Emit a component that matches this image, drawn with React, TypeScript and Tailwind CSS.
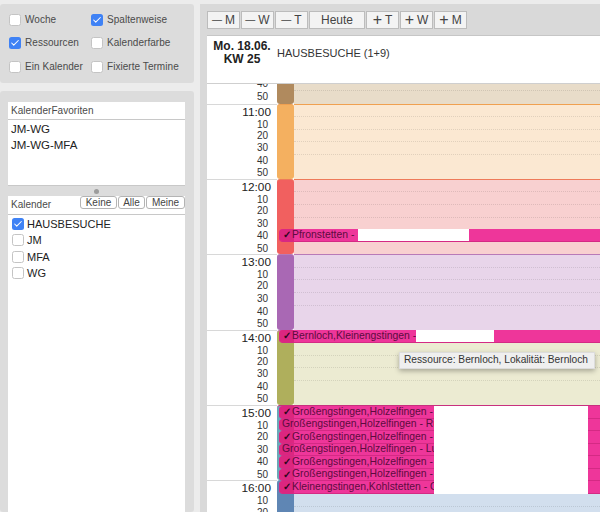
import { Check } from "lucide-react";

const hours = [
  { label: "11:00", strip: "bg-[#f4b060]", body: "bg-[#fbe8d2]", line: "border-[#f0a050]" },
  { label: "12:00", strip: "bg-[#f1605f]", body: "bg-[#f8d0d0]", line: "border-[#ee7a5a]" },
  { label: "13:00", strip: "bg-[#a968b4]", body: "bg-[#e8d5ea]", line: "border-[#b87ab8]" },
  { label: "14:00", strip: "bg-[#afaf5c]", body: "bg-[#ecebd2]", line: "border-[#c060a8]" },
  { label: "15:00", strip: "bg-[#6aa8b8]", body: "bg-[#d4e4e8]", line: "border-[#c8307e]" },
  { label: "16:00", strip: "bg-[#5f86b4]", body: "bg-[#d2dfee]", line: "border-[#6f92bb]" },
];

const nav = [
  { sign: "—", text: "M", w: "w-[33px]" },
  { sign: "—", text: "W", w: "w-[33px]" },
  { sign: "—", text: "T", w: "w-[33px]" },
  { sign: "", text: "Heute", w: "w-[56px]" },
  { sign: "+", text: "T", w: "w-[33px]" },
  { sign: "+", text: "W", w: "w-[33px]" },
  { sign: "+", text: "M", w: "w-[33px]" },
];

const stacked = [
  { text: "Großengstingen,Holzelfingen - ", done: true },
  { text: "Großengstingen,Holzelfingen - Ru", done: false },
  { text: "Großengstingen,Holzelfingen - ", done: true },
  { text: "Großengstingen,Holzelfingen - Lu", done: false },
  { text: "Großengstingen,Holzelfingen - ", done: true },
  { text: "Großengstingen,Holzelfingen - ", done: true },
  { text: "Kleinengstingen,Kohlstetten - O", done: true },
];

function Box({ checked }: { checked?: boolean }) {
  return (
    <span
      className={
        checked
          ? "flex h-3 w-3 shrink-0 items-center justify-center rounded-[2.5px] bg-[#3f82f5]"
          : "flex h-3 w-3 shrink-0 items-center justify-center rounded-[2.5px] border border-[#c4c4c4] bg-white"
      }
    >
      {checked && <Check size={10} strokeWidth={2.5} className="text-white" />}
    </span>
  );
}

function Option({ label, checked }: { label: string; checked?: boolean }) {
  return (
    <div className="flex items-center gap-[4px] text-[10px] tracking-[0.05px] text-[#4a4a4a]">
      <Box checked={checked} />
      <span>{label}</span>
    </div>
  );
}

function Event({ text, done, white }: { text: string; done?: boolean; white?: string }) {
  return (
    <div className="relative flex h-[12.57px] items-center overflow-hidden whitespace-nowrap rounded-l-[4px] border-b border-[#d42a84] bg-[#ee369a] text-[10.4px] leading-none text-[#5c0c40]">
      <span className="absolute inset-y-0 left-0 w-[15px] bg-[#dc2680]" />
      <span className="relative flex items-center pl-[3px]">
        {done && <span className="mx-[1px] w-[8px] text-[10px] font-bold text-[#300620]">✓</span>}
        {text}
      </span>
      {white && <span className={white} />}
    </div>
  );
}

function Hour({ hour }: { hour: (typeof hours)[number] }) {
  const mins = ["10", "20", "30", "40", "50"];
  return (
    <div className="flex h-[75.4px] shrink-0">
      <div className="w-[70px] shrink-0 border-t border-[#d8d8d8] bg-white text-right text-[#333]">
        <div className="h-[14px] pr-[6px] text-[11.8px] leading-[15px] text-[#222]">{hour.label}</div>
        <div className="h-[11.14px] pr-[9px] text-[10px] leading-[11.14px]">10</div>
        {mins.slice(1).map((m) => (
          <div key={m} className="h-[12.57px] pr-[9px] text-[10px] leading-[12.57px]">
            {m}
          </div>
        ))}
      </div>
      <div className={`w-[17px] shrink-0 rounded-[3px] border-t ${hour.strip} ${hour.line}`} />
      <div className={`flex-1 border-t ${hour.body} ${hour.line}`}>
        {mins.map((m) => (
          <div key={m} className="h-[12.57px] border-b border-dotted border-black/10 last:border-b-0" />
        ))}
      </div>
    </div>
  );
}

export default function App() {
  return (
    <div className="flex h-[512px] w-[600px] overflow-hidden bg-[#ececec] font-['Liberation_Sans',sans-serif]">
      {/* Sidebar */}
      <div className="flex w-[194px] shrink-0 flex-col gap-[8px] pt-[4px]">
        <div className="grid h-[79px] grid-cols-[82px_1fr] grid-rows-[23px_23px_25px] content-start rounded-[3px] bg-[#dcdcdc] pl-[9px] pt-[4px]">
          <Option label="Woche" />
          <Option label="Spaltenweise" checked />
          <Option label="Ressourcen" checked />
          <Option label="Kalenderfarbe" />
          <Option label="Ein Kalender" />
          <Option label="Fixierte Termine" />
        </div>

        <div className="flex flex-1 flex-col rounded-[3px] bg-[#dcdcdc] pl-[8px] pr-[9px] pt-[11px]">
          <div className="h-[84px] border-b border-[#c8c8c8] bg-white">
            <div className="flex h-[18px] items-center border-b border-[#c8c8c8] px-[3px] text-[10px] tracking-[0.05px] text-[#4a4a4a]">
              KalenderFavoriten
            </div>
            <div className="px-[3px] pt-[1px] text-[11.5px] leading-[16px] text-[#222]">
              <div>JM-WG</div>
              <div>JM-WG-MFA</div>
            </div>
          </div>

          <div className="flex h-[10px] items-center justify-center">
            <span className="h-[5px] w-[5px] rounded-full bg-[#9c9c9c]" />
          </div>

          <div className="flex-1 bg-white">
            <div className="flex h-[19px] items-start justify-between border-b border-[#c8c8c8] pl-[3px] text-[10px] text-[#4a4a4a]">
              <span className="pt-[1px]">Kalender</span>
              <div className="flex gap-[1px]">
                <button className="h-[13px] w-[37px] rounded-[3px] border border-[#b4b4b4] bg-white text-[10px] leading-none text-[#444]">
                  Keine
                </button>
                <button className="h-[13px] w-[27px] rounded-[3px] border border-[#b4b4b4] bg-white text-[10px] leading-none text-[#444]">
                  Alle
                </button>
                <button className="h-[13px] w-[39px] rounded-[3px] border border-[#b4b4b4] bg-white text-[10px] leading-none text-[#444]">
                  Meine
                </button>
              </div>
            </div>
            <div className="flex flex-col gap-[4.5px] pl-[4px] pt-[2.5px] text-[11px] leading-[12px] text-[#222]">
              {[
                { name: "HAUSBESUCHE", on: true },
                { name: "JM", on: false },
                { name: "MFA", on: false },
                { name: "WG", on: false },
              ].map((c) => (
                <div key={c.name} className="flex items-center gap-[3px]">
                  <Box checked={c.on} />
                  <span>{c.name}</span>
                </div>
              ))}
            </div>
          </div>
        </div>
      </div>

      {/* Calendar */}
      <div className="ml-[6px] mt-[4px] flex min-w-0 flex-1 flex-col bg-[#d9d9d9] pl-[7px]">
        <div className="flex h-[32px] shrink-0 gap-[1px] border-b border-[#c6c6c6] pt-[7px]">
          {nav.map((b) => (
            <div
              key={b.sign + b.text}
              className={`flex h-[18px] items-center justify-center gap-[3px] border border-[#bcbcbc] bg-[#f3f3f3] text-[12px] text-[#444] ${b.w}`}
            >
              {b.sign === "—" && <span className="text-[10px] leading-none">{b.sign}</span>}
              {b.sign === "+" && <span className="text-[16px] leading-none">{b.sign}</span>}
              <span>{b.text}</span>
            </div>
          ))}
        </div>

        <div className="flex h-[47px] shrink-0 bg-white">
          <div className="w-[70px] pt-[4px] text-center text-[12px] font-bold leading-[13px] text-[#222]">
            <div>Mo. 18.06.</div>
            <div>KW 25</div>
          </div>
          <div className="pt-[9px] text-[11px] text-[#333]">HAUSBESUCHE (1+9)</div>
        </div>

        <div className="relative flex-1 overflow-hidden border-t border-[#cfcfcf] bg-white">
          {/* Hour rows, the first one cut off by the header */}
          <div className="flex h-[19.5px] overflow-hidden">
            <div className="w-[70px] shrink-0 pr-[9px] text-right text-[10px] leading-[12.57px] text-[#333]">
              <div className="-mt-[6px]">40</div>
              <div>50</div>
            </div>
            <div className="w-[17px] shrink-0 rounded-b-[3px] bg-[#b08a5e]" />
            <div className="flex-1 bg-[#e8dcc9]">
              <div className="h-[6.5px] border-b border-dotted border-black/10" />
            </div>
          </div>
          {hours.map((h) => (
            <Hour key={h.label} hour={h} />
          ))}

          {/* Appointments */}
          <div className="absolute left-[72px] right-0 top-[145px]">
            <Event text="Pfronstetten -" done white="absolute inset-y-0 left-[79px] w-[111px] bg-white" />
          </div>
          <div className="absolute left-[72px] right-0 top-[246px]">
            <Event text="Bernloch,Kleinengstingen -" done white="absolute inset-y-0 left-[137px] w-[78px] bg-white" />
          </div>
          <div className="absolute left-[72px] right-0 top-[321px] flex flex-col border-t border-[#c8307e]">
            {stacked.map((e, i) => (
              <Event key={i} text={e.text} done={e.done} />
            ))}
            <div className="absolute bottom-0 left-[155px] top-0 w-[154px] bg-white" />
          </div>

          {/* Tooltip */}
          <div className="absolute left-[192px] top-[267.5px] flex h-[17px] w-[196px] items-center whitespace-nowrap border border-[#dcdcdc] bg-[#efefef] pl-[4px] text-[10.2px] text-[#333] shadow-[0_2px_5px_rgba(0,0,0,0.3)]">
            Ressource: Bernloch, Lokalität: Bernloch
          </div>
        </div>
      </div>
    </div>
  );
}
